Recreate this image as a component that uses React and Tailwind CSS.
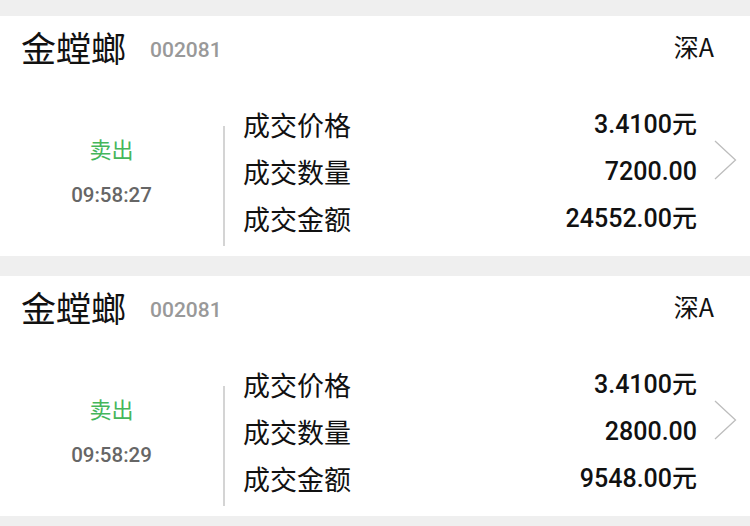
const trades = [
  { name: "金螳螂", code: "002081", market: "深A", side: "卖出", time: "09:58:27", price: "3.4100元", qty: "7200.00", amount: "24552.00元" },
  { name: "金螳螂", code: "002081", market: "深A", side: "卖出", time: "09:58:29", price: "3.4100元", qty: "2800.00", amount: "9548.00元" },
]

const cjk = { fontFamily: '"Noto Sans CJK SC", sans-serif' }
const num = { fontFamily: 'Roboto, "Noto Sans CJK SC", sans-serif' }

function Card({ t }) {
  return (
    <div className="bg-white h-[240px] flex flex-col">
      <div className="h-[60px] flex items-center pl-[21px] pr-[36px]">
        <span className="text-[35px] leading-none text-[#111]" style={cjk}>{t.name}</span>
        <span className="ml-[24px] mt-[8px] text-[21px] leading-none text-[#999] font-medium" style={num}>{t.code}</span>
        <span className="ml-auto text-[25px] leading-none text-[#111]" style={cjk}>{t.market}</span>
      </div>
      <div className="flex mt-[25px]">
        <div className="w-[223px] h-[141px] flex flex-col justify-center items-center">
          <div className="text-[22px] leading-[47px] text-[#45b65a]" style={cjk}>{t.side}</div>
          <div className="text-[20.5px] leading-[47px] text-[#666] font-medium" style={num}>{t.time}</div>
        </div>
        <div className="w-[2px] h-[120px] mt-[25px] bg-[#d4d4d4]"></div>
        <div className="ml-[18px] w-[454px] text-[27px] leading-[47px] text-[#111]">
          {[["成交价格", t.price], ["成交数量", t.qty], ["成交金额", t.amount]].map(([k, v]) => (
            <div key={k} className="flex justify-between">
              <span style={cjk}>{k}</span>
              <span className="font-medium text-[25px]" style={num}>{v}</span>
            </div>
          ))}
        </div>
        <svg className="ml-[17px] mt-[39px]" width="23" height="40" viewBox="0 0 23 40">
          <path d="M1 1 L21.5 20 L1 39" fill="none" stroke="#bdbdbd" strokeWidth="1.3" />
        </svg>
      </div>
    </div>
  )
}

function App() {
  return (
    <div className="w-[750px] h-[526px] bg-[#efefef] pt-[16px] flex flex-col gap-[20px] overflow-hidden">
      {trades.map((t, i) => (
        <Card key={i} t={t} />
      ))}
    </div>
  )
}

export default App
